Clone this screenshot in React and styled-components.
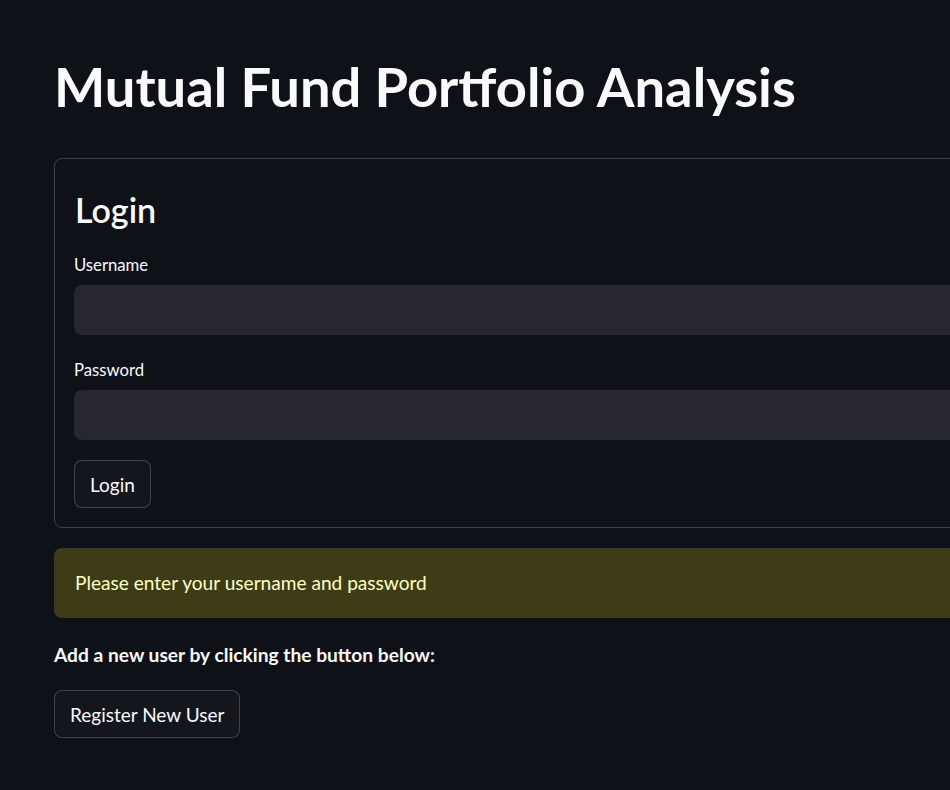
import React from 'react';
import styled, { createGlobalStyle } from 'styled-components';

const GlobalStyle = createGlobalStyle`
    body {
        margin: 0;
        background: #0e1117;
        color: #fafafa;
        font-family: Lato, "Noto Sans", sans-serif;
        overflow: hidden;
    }
`

const Page = styled.div`
    padding: 56px 0 40px 54px;
    width: 1100px;
`

const Title = styled.h1`
    margin: 0;
    height: 60px;
    line-height: 60px;
    font-size: 54.3px;
    font-weight: 700;
    color: #fafafa;
`

const FormBox = styled.div`
    margin-top: 42px;
    border: 1px solid rgba(250, 250, 250, 0.2);
    border-radius: 8px;
    padding: 27px 20px 19px 19px;
    display: flex;
    flex-direction: column;
    align-items: flex-start;
`

const FormHeading = styled.h2`
    margin: 0 0 0 1px;
    height: 48px;
    line-height: 48px;
    font-size: 34px;
    font-weight: 600;
`

const Field = styled.div`
    width: 100%;
    margin-top: ${p => p.gap}px;
    display: flex;
    flex-direction: column;
    gap: 10px;
`

const Label = styled.label`
    height: 20px;
    line-height: 20px;
    font-size: 16.7px;
    color: #fafafa;
`

const Input = styled.input`
    box-sizing: border-box;
    width: 100%;
    height: 50px;
    border: none;
    border-radius: 8px;
    background: #262730;
    color: #fafafa;
    padding: 0 16px;
    font-family: inherit;
    font-size: 19px;
    outline: none;
`

const Button = styled.button`
    box-sizing: border-box;
    height: 48px;
    margin-top: ${p => p.gap}px;
    padding: 0 15px;
    border: 1px solid rgba(250, 250, 250, 0.2);
    border-radius: 8px;
    background: #13161d;
    color: #fafafa;
    font-family: inherit;
    font-size: 19px;
    cursor: pointer;
`

const Warning = styled.div`
    margin-top: 20px;
    height: 70px;
    line-height: 70px;
    padding: 0 21px;
    border-radius: 8px;
    background: #3e3c17;
    color: #ffffc2;
    font-size: 19.1px;
`

const Note = styled.p`
    margin: 25px 0 0 0;
    height: 24px;
    line-height: 24px;
    font-size: 19.2px;
    font-weight: 700;
`

class App extends React.Component {
    render() {
        return (
            <Page>
                <GlobalStyle />
                <Title>Mutual Fund Portfolio Analysis</Title>
                <FormBox>
                    <FormHeading>Login</FormHeading>
                    <Field gap={21}>
                        <Label>Username</Label>
                        <Input type="text" />
                    </Field>
                    <Field gap={25}>
                        <Label>Password</Label>
                        <Input type="password" />
                    </Field>
                    <Button gap={20}>Login</Button>
                </FormBox>
                <Warning>Please enter your username and password</Warning>
                <Note>Add a new user by clicking the button below:</Note>
                <Button gap={23}>Register New User</Button>
            </Page>
        )
    }
}

export default App;
